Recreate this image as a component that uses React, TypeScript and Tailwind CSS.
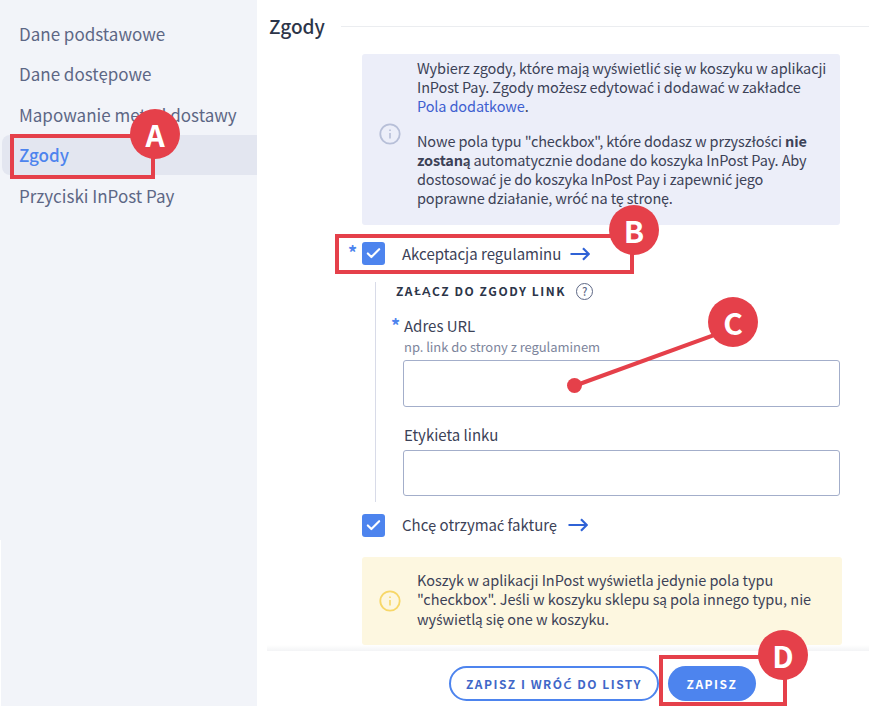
import { Check } from "lucide-react";

const FONT = "font-['Noto_Sans_CJK_SC','Source_Sans_Pro',sans-serif]";

const NAV = ["Dane podstawowe", "Dane dostępowe", "Mapowanie metod dostawy", "Zgody", "Przyciski InPost Pay"];

// the CJK font has no ś, ć, ż etc. and stacks a loose accent on the base letter, so those letters get Lato
const T = ({ children }: { children: string }) => (
  <>
    {children.split(/([^\u0000-\u00ff])/).map((part, i) =>
      i % 2 ? (
        <span key={i} className="font-['Lato'] leading-none">
          {part}
        </span>
      ) : (
        part
      )
    )}
  </>
);

const InfoIcon = ({ color }: { color: string }) => (
  <svg width="22" height="22" viewBox="0 0 22 22" fill="none" style={{ color }} className="shrink-0">
    <circle cx="11" cy="11" r="9.7" stroke="currentColor" strokeWidth="1.8" />
    <path d="M11 10v5.5M11 6.4v1.6" stroke="currentColor" strokeWidth="1.6" />
  </svg>
);

const Arrow = () => (
  <svg width="20" height="14" viewBox="0 0 20 14" fill="none" className="shrink-0">
    <path d="M0.5 7H18.5M13 1.2L18.8 7L13 12.8" stroke="#2f62d6" strokeWidth="2.2" />
  </svg>
);

const CheckBox = () => (
  <span className="flex h-[23px] w-[23px] shrink-0 items-center justify-center rounded-[3px] bg-[#4d84ee]">
    <Check className="h-[17px] w-[17px] text-white" strokeWidth={3} />
  </span>
);

const Badge = ({ letter, className }: { letter: string; className: string }) => (
  <div className={`absolute flex h-[50px] w-[50px] items-center justify-center rounded-full bg-[#e5404a] text-[30px] font-bold leading-none text-white ${className}`}>
    {letter}
  </div>
);

export default function App() {
  return (
    <div className={`relative flex h-[706px] w-[869px] overflow-hidden bg-white text-[#3c4257] ${FONT}`}>
      <aside className="w-[257px] shrink-0 bg-[#f2f4f9] pl-[2px] pt-[13px]">
        {NAV.map((item) => (
          <div
            key={item}
            className={
              item === "Zgody"
                ? "flex h-[40.5px] items-center rounded-l-lg bg-[#e3e6f0] pl-[17px] text-[17px] font-medium text-[#4d84ee]"
                : "flex h-[40.5px] items-center pl-[17px] text-[17px] text-[#5d6785]"
            }
          >
            <T>{item}</T>
          </div>
        ))}
      </aside>

      <main className="flex min-w-0 flex-1 flex-col">
        <div className="flex h-[54px] items-start pl-[12px] pt-[13px]">
          <h1 className="text-[19px] font-medium leading-[26px] text-[#2c3549]">Zgody</h1>
          <div className="ml-[16px] mt-[13px] h-px flex-1 bg-[#ebedf0]" />
        </div>

        <div className="ml-[105px] mr-[29px] flex h-[171px] items-center rounded-[3px] bg-[#eceef9] pb-[12px] pr-[12px] text-[14.5px] leading-[19px] tracking-[-0.12px]">
          <div className="flex w-[55px] shrink-0 justify-center">
            <InfoIcon color="#b7bfd8" />
          </div>
          <div className="-mt-[2px]">
            <p>
              <T>Wybierz zgody, które mają wyświetlić się w koszyku w aplikacji InPost Pay. Zgody możesz edytować i dodawać w zakładce</T>{" "}
              <span className="text-[#3f5fd0]">Pola dodatkowe</span>.
            </p>
            <p className="mt-[16px]">
              <T>Nowe pola typu "checkbox", które dodasz w przyszłości</T>{" "}
              <b>
                <T>nie zostaną</T>
              </b>{" "}
              <T>automatycznie dodane do koszyka InPost Pay. Aby dostosować je do koszyka InPost Pay i zapewnić jego poprawne działanie, wróć na tę stronę.</T>
            </p>
          </div>
        </div>

        <div className="relative ml-[105px] mt-[17px] flex h-[23px] items-center">
          <span className="absolute left-[-14px] top-[1px] text-[18px] font-bold leading-[18px] text-[#4d84ee]">*</span>
          <CheckBox />
          <span className="ml-[17px] pt-px text-[15px]">Akceptacja regulaminu</span>
          <span className="ml-[9px]">
            <Arrow />
          </span>
        </div>

        <div className="ml-[118px] mr-[29px] mt-[17px] h-[220px] border-l border-[#d8dbe8] pl-[20px]">
          <div className="flex items-center text-[12px] font-bold leading-[18px] tracking-[1.55px] text-[#2c3549]">
            <T>ZAŁĄCZ DO ZGODY LINK</T>
            <span className="ml-[10px] flex h-[17px] w-[17px] items-center justify-center rounded-full border-[1.5px] border-[#5d6785] text-[11px] font-medium tracking-normal text-[#5d6785]">?</span>
          </div>
          <div className="relative ml-[8px] mt-[16px] text-[15px] leading-[20px]">
            <span className="absolute left-[-13px] top-[0px] text-[18px] font-bold leading-[18px] text-[#4d84ee]">*</span>
            Adres URL
          </div>
          <div className="ml-[8px] mt-[2px] text-[13px] leading-[18px] tracking-[-0.05px] text-[#7d859c]">np. link do strony z regulaminem</div>
          <div className="ml-[7px] mt-[4px] h-[47px] rounded-[3px] border border-[#a3aeca] bg-white" />
          <div className="ml-[8px] mt-[18px] text-[15px] leading-[20px]">Etykieta linku</div>
          <div className="ml-[7px] mt-[5px] h-[46px] rounded-[3px] border border-[#a3aeca] bg-white" />
        </div>

        <div className="ml-[105px] mt-[11px] flex h-[24px] items-center">
          <CheckBox />
          <span className="ml-[17px] text-[15px]">
            <T>Chcę otrzymać fakturę</T>
          </span>
          <span className="ml-[11px]">
            <Arrow />
          </span>
        </div>

        <div className="ml-[105px] mr-[27px] mt-[20px] flex h-[88px] items-center rounded-[3px] bg-[#fdf7e0] text-[14.5px] leading-[19.5px] tracking-[-0.03px]">
          <div className="flex w-[55px] shrink-0 justify-center">
            <InfoIcon color="#f7d768" />
          </div>
          <p className="mb-[4px] w-[402px]">
            <T>Koszyk w aplikacji InPost wyświetla jedynie pola typu "checkbox". Jeśli w koszyku sklepu są pola innego typu, nie wyświetlą się one w koszyku.</T>
          </p>
        </div>

        <div className="ml-[10px] flex flex-1 flex-col">
          <div className="h-[6px] bg-gradient-to-b from-white to-[#f3f4f6]" />
          <div className="flex items-start justify-end gap-[9px] pr-[113px] pt-[15px]">
            <button className="h-[35px] w-[210px] rounded-full border-2 border-[#4d84ee] bg-white text-[12px] font-bold tracking-[1.5px] text-[#3f67c8]">
              <T>ZAPISZ I WRÓĆ DO LISTY</T>
            </button>
            <button className="h-[35px] w-[88px] rounded-full bg-[#4d84ee] text-[12px] font-bold tracking-[1.5px] text-white">
              ZAPISZ
            </button>
          </div>
        </div>
      </main>

      {/* white edge at the bottom left of the sidebar */}
      <div className="absolute bottom-0 left-0 h-[166px] w-px bg-white" />

      {/* annotations over the screenshot */}
      <div className="absolute left-[10px] top-[134px] h-[45px] w-[145px] border-[4px] border-[#e5404a]" />
      <Badge letter="A" className="left-[130px] top-[109px]" />
      <div className="absolute left-[335px] top-[234px] h-[40px] w-[299px] border-[4px] border-[#e5404a]" />
      <Badge letter="B" className="left-[609px] top-[205px]" />
      <div className="absolute left-[574px] top-[384px] h-[4px] w-[165px] origin-left rotate-[-20deg] bg-[#e5404a]" />
      <div className="absolute left-[567px] top-[378px] h-[15px] w-[15px] rounded-full bg-[#e5404a]" />
      <Badge letter="C" className="left-[708px] top-[297px]" />
      <div className="absolute left-[659px] top-[655px] h-[51px] w-[128px] border-[4px] border-[#e5404a]" />
      <Badge letter="D" className="left-[758px] top-[630px]" />
    </div>
  );
}
